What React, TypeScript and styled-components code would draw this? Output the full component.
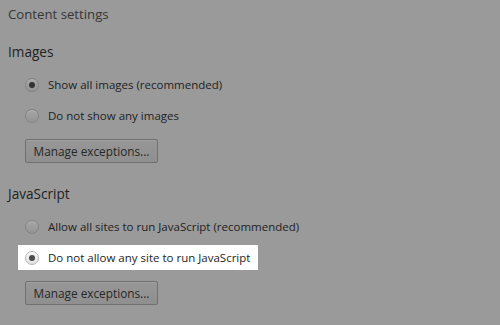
import styled, { createGlobalStyle } from 'styled-components';

const GlobalStyle = createGlobalStyle`
  html, body {
    margin: 0;
    padding: 0;
    background: #9a9a9a;
  }
  body {
    font-family: "Open Sans", "Noto Sans", sans-serif;
  }
`;

const Page = styled.div`
  width: 500px;
  height: 325px;
  box-sizing: border-box;
  padding: 4px 0 0 8px;
  background: #9a9a9a;
  overflow: hidden;
`;

const Title = styled.h1`
  margin: 0;
  font-size: 13.2px;
  font-weight: 400;
  line-height: 20px;
  color: #363636;
`;

const Section = styled.section`
  margin-top: 18px;

  & + & {
    margin-top: 21px;
  }
`;

const SectionTitle = styled.h3`
  margin: 0 0 10px;
  font-size: 13.6px;
  font-weight: 400;
  line-height: 20px;
  color: #222;
`;

const Options = styled.div`
  display: flex;
  flex-direction: column;
  gap: 6px;
`;

const Option = styled.label<{ $highlight?: boolean }>`
  display: flex;
  align-items: center;
  gap: 9px;
  align-self: flex-start;
  height: 25px;
  margin-left: 10px;
  padding: 0 8px 0 7px;
  background: ${({ $highlight }) => ($highlight ? '#ffffff' : 'transparent')};
  font-size: 11.5px;
  color: #1e1e1e;
  cursor: default;
`;

const Radio = styled.span<{ $checked?: boolean; $light?: boolean }>`
  position: relative;
  flex: none;
  width: 14px;
  height: 14px;
  border-radius: 50%;
  box-sizing: border-box;
  border: 1px solid ${({ $light }) => ($light ? '#b4b4b4' : '#818181')};
  background: ${({ $light }) =>
    $light
      ? 'linear-gradient(#f6f6f6, #e2e2e2)'
      : 'linear-gradient(#a6a6a6, #949494)'};
  box-shadow: inset 0 1px 1px ${({ $light }) => ($light ? 'rgba(255,255,255,0.9)' : 'rgba(255,255,255,0.15)')};

  &::after {
    content: '';
    display: ${({ $checked }) => ($checked ? 'block' : 'none')};
    position: absolute;
    left: 3px;
    top: 3px;
    width: 6px;
    height: 6px;
    border-radius: 50%;
    background: ${({ $light }) => ($light ? '#4a4a4a' : '#333')};
  }
`;

const Button = styled.button`
  margin: 11px 0 0 17px;
  height: 24px;
  width: 133px;
  padding: 0;
  border: 1px solid #707070;
  border-radius: 2px;
  background: linear-gradient(#979797, #8f8f8f);
  box-shadow: inset 0 1px 0 rgba(255, 255, 255, 0.1);
  font-family: "Open Sans", "Noto Sans", sans-serif;
  font-size: 11.8px;
  color: #262626;
`;

type Choice = { label: string; checked?: boolean; highlight?: boolean };

const sections: { title: string; choices: Choice[] }[] = [
  {
    title: 'Images',
    choices: [
      { label: 'Show all images (recommended)', checked: true },
      { label: 'Do not show any images' },
    ],
  },
  {
    title: 'JavaScript',
    choices: [
      { label: 'Allow all sites to run JavaScript (recommended)' },
      { label: 'Do not allow any site to run JavaScript', checked: true, highlight: true },
    ],
  },
];

export default function App() {
  return (
    <>
      <GlobalStyle />
      <Page>
        <Title>Content settings</Title>
        {sections.map((s) => (
          <Section key={s.title}>
            <SectionTitle>{s.title}</SectionTitle>
            <Options>
              {s.choices.map((c) => (
                <Option key={c.label} $highlight={c.highlight}>
                  <Radio $checked={c.checked} $light={c.highlight} />
                  {c.label}
                </Option>
              ))}
            </Options>
            <Button>Manage exceptions...</Button>
          </Section>
        ))}
      </Page>
    </>
  );
}
